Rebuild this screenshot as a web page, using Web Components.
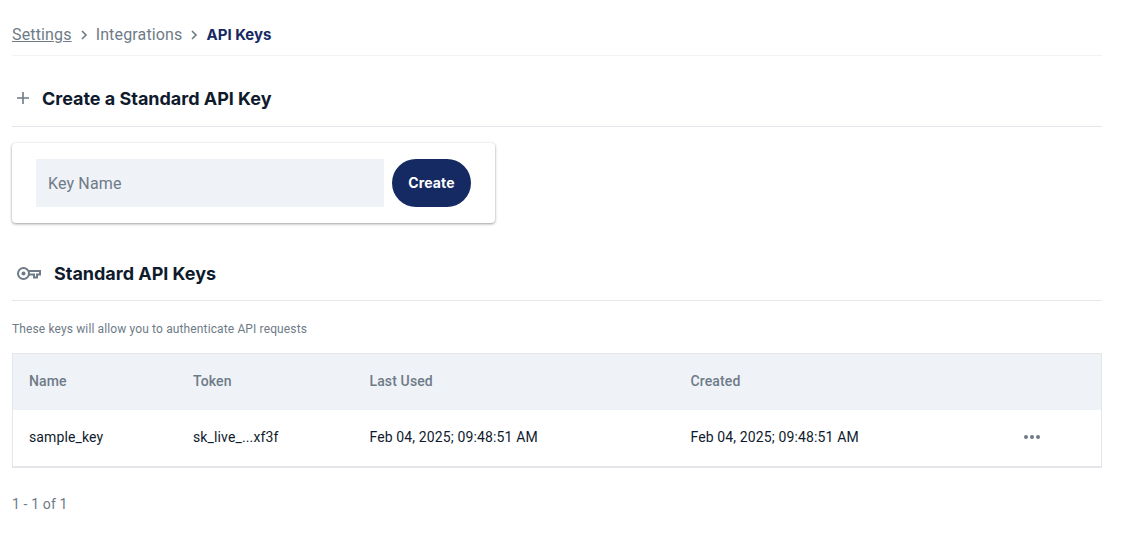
<!DOCTYPE html>
<html>
<head>
<meta charset="utf-8">
<title>API Keys</title>
<style>
	html, body { margin: 0; background: #fff; }
	body { font-family: Roboto, "Liberation Sans", sans-serif; letter-spacing: .13px; }
</style>
</head>
<body>
<api-keys-page></api-keys-page>

<script>
class BreadCrumbs extends HTMLElement {
	constructor() {
		super();
		this.attachShadow({ mode: 'open' });
		this.shadowRoot.innerHTML = `
			<style>
				:host { display: flex; align-items: center; height: 56px; padding-top: 13px; box-sizing: border-box; border-bottom: 1px solid #f1f3f5; font-size: 16px; letter-spacing: .15px; color: #6e7b87; }
				a { color: inherit; text-decoration: underline; }
				svg { width: 8px; height: 10px; margin: 1px 8px 0 8px; flex: none; }
				b { font-family: Inter, sans-serif; font-size: 15px; font-weight: 700; letter-spacing: 0; color: #152a63; margin-left: 0; }
			</style>
			<a href="#">Settings</a>
			<svg viewBox="0 0 8 10"><path d="M2 1l4 4-4 4" fill="none" stroke="#6e7b87" stroke-width="1.6"/></svg>
			<span>Integrations</span>
			<svg viewBox="0 0 8 10"><path d="M2 1l4 4-4 4" fill="none" stroke="#6e7b87" stroke-width="1.6"/></svg>
			<b>API Keys</b>
		`;
	}
}

class SectionHead extends HTMLElement {
	constructor() {
		super();
		this.attachShadow({ mode: 'open' });
		this.shadowRoot.innerHTML = `
			<style>
				:host { display: flex; align-items: center; box-sizing: border-box; border-bottom: 1px solid #e4e7eb; }
				h2 { margin: 0; font-family: Inter, sans-serif; font-size: 18px; font-weight: 700; letter-spacing: -.02px; color: #0f1b2d; white-space: nowrap; }
				::slotted(svg) { flex: none; }
			</style>
			<slot name="icon"></slot>
			<h2><slot></slot></h2>
		`;
	}
}

class CreateKeyCard extends HTMLElement {
	constructor() {
		super();
		this.attachShadow({ mode: 'open' });
		this.shadowRoot.innerHTML = `
			<style>
				:host { display: flex; gap: 8px; width: 483px; height: 80px; box-sizing: border-box; padding: 16px 24px; background: #fff; border-radius: 4px; box-shadow: 0 1px 3px rgba(0,0,0,.38), 0 0 2px rgba(0,0,0,.06); }
				input { flex: 1; min-width: 0; height: 48px; box-sizing: border-box; padding: 0 12px; border: 0; outline: 0; background: #eff2f7; font: 16px Roboto, sans-serif; letter-spacing: .15px; color: #333; }
				input::placeholder { color: #6e7b87; opacity: 1; }
				button { width: 79px; height: 48px; padding: 0 0 2px; border: 0; border-radius: 24px; background: #152a63; color: #fff; font: 700 14px Inter, sans-serif; letter-spacing: .1px; }
			</style>
			<input placeholder="Key Name">
			<button>Create</button>
		`;
	}
}

class KeysTable extends HTMLElement {
	constructor() {
		super();
		this.attachShadow({ mode: 'open' });
		this.shadowRoot.innerHTML = `
			<style>
				:host { display: block; box-sizing: border-box; border: 1px solid #e4e6e9; border-bottom-width: 2px; font-size: 14px; }
				.row { display: grid; grid-template-columns: 164px 176.5px 321px 1fr 78px; align-items: center; box-sizing: border-box; height: 56px; padding: 0 0 2px 16px; }
				.head { background: #eff2f7; color: #6e7b87; font-weight: 500; }
				.body { color: #0f1b2d; }
				svg { display: block; width: 18px; height: 6px; }
			</style>
			<div class="row head">
				<span>Name</span><span>Token</span><span>Last Used</span><span>Created</span><span></span>
			</div>
			<div class="row body">
				<span>sample_key</span>
				<span>sk_live_...xf3f</span>
				<span>Feb 04, 2025; 09:48:51 AM</span>
				<span>Feb 04, 2025; 09:48:51 AM</span>
				<svg viewBox="0 0 18 6" fill="#6e7b87"><circle cx="3" cy="3" r="2"/><circle cx="9" cy="3" r="2"/><circle cx="15" cy="3" r="2"/></svg>
			</div>
		`;
	}
}

class ApiKeysPage extends HTMLElement {
	constructor() {
		super();
		this.attachShadow({ mode: 'open' });
		this.shadowRoot.innerHTML = `
			<style>
				:host { display: block; width: 1090px; margin-left: 12px; }
				.h1 { height: 71px; padding-top: 14px; }
				.h2 { height: 55px; margin-top: 23px; }
				.plus { margin: 0 13px 0 5px; }
				.key { margin: 0 13px 0 5px; }
				create-key-card { margin-top: 16px; }
				.note { margin: 21px 0 17px; font-size: 12px; line-height: 14px; color: #6e7b87; }
				.count { margin-top: 27px; font-size: 14px; line-height: 18px; color: #6e7b87; }
			</style>
			<bread-crumbs></bread-crumbs>
			<section-head class="h1">
				<svg class="plus" slot="icon" width="12" height="12" viewBox="0 0 12 12"><path d="M6 0v12M0 6h12" stroke="#6e7b87" stroke-width="1.6"/></svg>
				Create a Standard API Key
			</section-head>
			<create-key-card></create-key-card>
			<section-head class="h2">
				<svg class="key" slot="icon" width="24" height="13" viewBox="0 0 24 13" fill="none" stroke="#6e7b87" stroke-width="2"><circle cx="6.500" cy="6.500" r="5.500"/><circle cx="6.500" cy="6.500" r="2" fill="#6e7b87" stroke="none"/><path d="M12 4h11v3.500h-3v3h-3v-3h-5"/></svg>
				Standard API Keys
			</section-head>
			<div class="note">These keys will allow you to authenticate API requests</div>
			<keys-table></keys-table>
			<div class="count">1 - 1 of 1</div>
		`;
	}
}

customElements.define('bread-crumbs', BreadCrumbs);
customElements.define('section-head', SectionHead);
customElements.define('create-key-card', CreateKeyCard);
customElements.define('keys-table', KeysTable);
customElements.define('api-keys-page', ApiKeysPage);
</script>
</body>
</html>
